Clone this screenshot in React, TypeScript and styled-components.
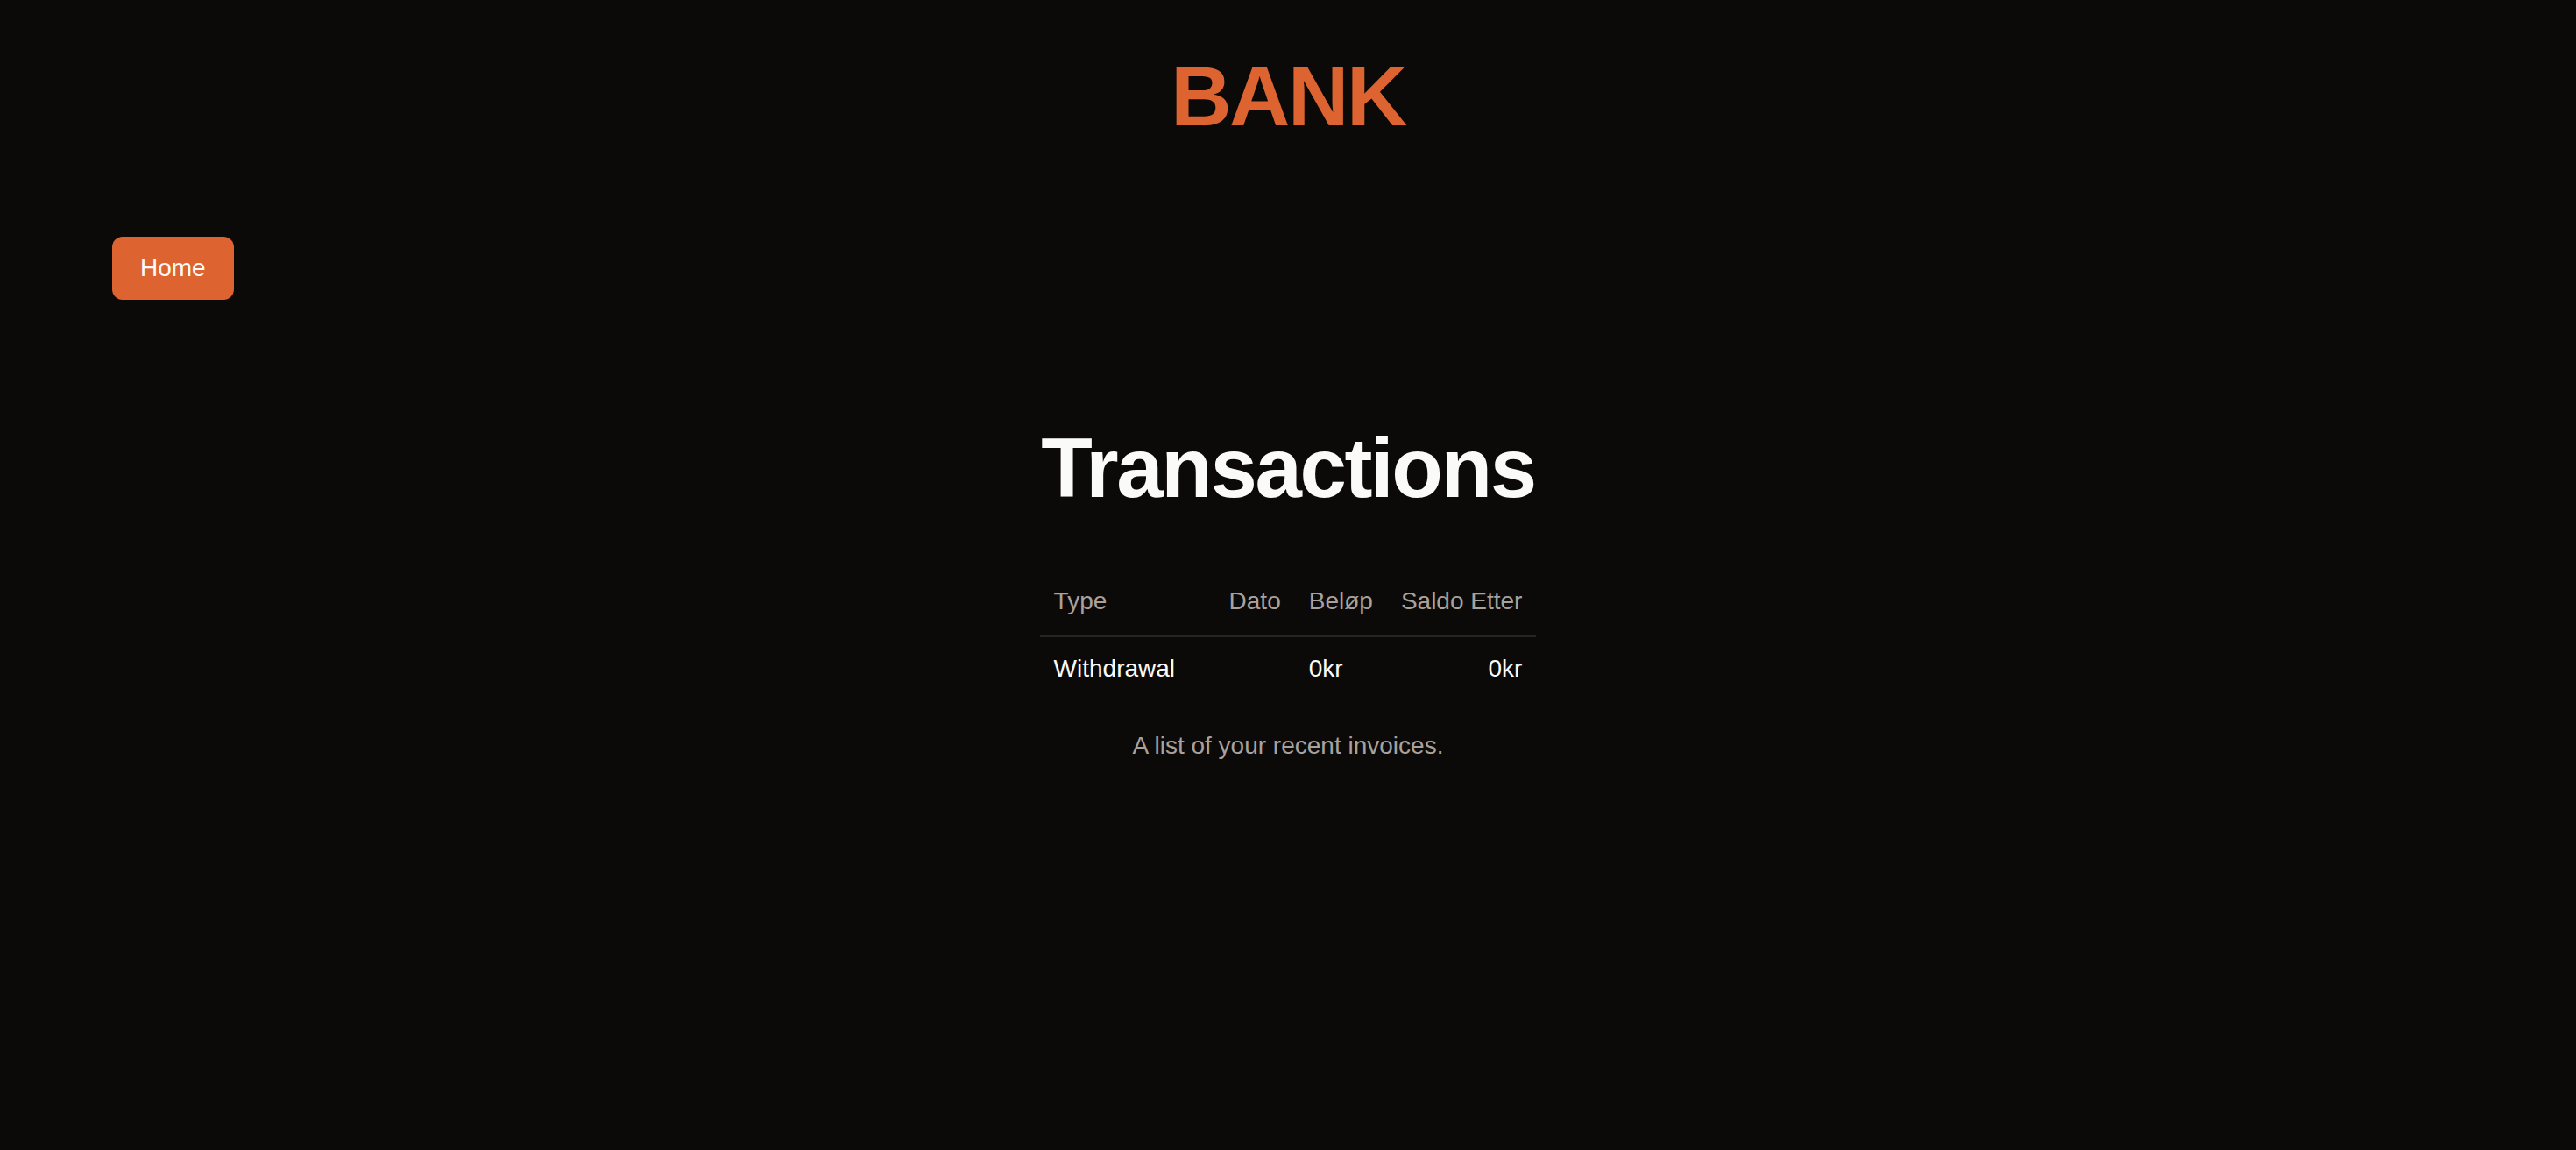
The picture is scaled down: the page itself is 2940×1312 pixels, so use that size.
import styled, { createGlobalStyle } from 'styled-components'

const GlobalStyle = createGlobalStyle`
  html, body {
    margin: 0;
    padding: 0;
    background: #0c0a09;
    color: #fafaf9;
    font-family: "Liberation Sans", Arial, sans-serif;
  }
  * { box-sizing: border-box; }
`

const Page = styled.div`
  min-height: 1312px;
  display: flex;
  flex-direction: column;
  padding: 62px 128px 0;
`

const Logo = styled.h1`
  margin: 0;
  text-align: center;
  font-size: 96px;
  line-height: 96px;
  font-weight: 700;
  letter-spacing: -0.025em;
  color: #dd6430;
`

const Nav = styled.nav`
  display: flex;
  margin-top: 112px;
`

const NavButton = styled.button`
  height: 72px;
  padding: 0 32px;
  border: none;
  border-radius: 12px;
  background: #dd6430;
  color: #fafaf9;
  font-family: inherit;
  font-size: 28px;
  line-height: 40px;
  cursor: pointer;
`

const Main = styled.main`
  display: flex;
  flex-direction: column;
  align-items: center;
  margin-top: 144px;
`

const Title = styled.h2`
  margin: 0;
  font-size: 96px;
  line-height: 96px;
  font-weight: 700;
  letter-spacing: -0.025em;
  color: #fafaf9;
`

const Table = styled.table`
  margin-top: 64px;
  border-collapse: collapse;
  font-size: 28px;
  line-height: 40px;
`

const Caption = styled.caption`
  caption-side: bottom;
  margin-top: 32px;
  color: #a8a29e;
`

const HeadRow = styled.tr`
  border-bottom: 2px solid #292524;
`

const Th = styled.th<{ $right?: boolean; $w?: number }>`
  height: 80px;
  padding: 0 16px;
  text-align: ${({ $right }) => ($right ? 'right' : 'left')};
  vertical-align: middle;
  font-weight: 400;
  color: #a8a29e;
  white-space: nowrap;
  ${({ $w }) => ($w ? `width: ${$w}px;` : '')}
`

const Td = styled.td<{ $right?: boolean }>`
  padding: 16px;
  text-align: ${({ $right }) => ($right ? 'right' : 'left')};
  vertical-align: middle;
  white-space: nowrap;
`

const rows = [{ type: 'Withdrawal', dato: '', belop: '0kr', saldo: '0kr' }]

export default function App() {
  return (
    <>
      <GlobalStyle />
      <Page>
        <Logo>BANK</Logo>
        <Nav>
          <NavButton>Home</NavButton>
        </Nav>
        <Main>
          <Title>Transactions</Title>
          <Table>
            <Caption>A list of your recent invoices.</Caption>
            <thead>
              <HeadRow>
                <Th $w={200}>Type</Th>
                <Th>Dato</Th>
                <Th>Beløp</Th>
                <Th $right>Saldo Etter</Th>
              </HeadRow>
            </thead>
            <tbody>
              {rows.map((r, i) => (
                <tr key={i}>
                  <Td>{r.type}</Td>
                  <Td>{r.dato}</Td>
                  <Td>{r.belop}</Td>
                  <Td $right>{r.saldo}</Td>
                </tr>
              ))}
            </tbody>
          </Table>
        </Main>
      </Page>
    </>
  )
}
